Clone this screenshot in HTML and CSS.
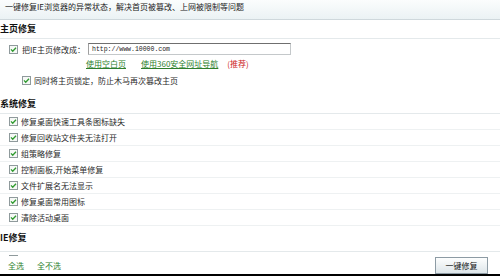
FILE: index.html
```html
<!DOCTYPE html>
<html lang="zh-CN">
<head>
<meta charset="utf-8">
<title>IE修复</title>
<link rel="stylesheet" href="styles.css">
</head>
<body>
<div class="app">
  <div class="topbar">一键修复IE浏览器的异常状态，解决首页被篡改、上网被限制等问题</div>
  <div class="content">
    <div class="sec-title">主页修复</div>
    <div class="home-row">
      <svg class="cb" width="9" height="9" viewBox="0 0 9 9"><rect x="0.5" y="0.5" width="8" height="8" fill="#f6f8f6" stroke="#8f9a9c"/><path d="M2 4.4 L3.7 6.2 L7 2.7" stroke="#2f9a2f" stroke-width="1.3" fill="none"/></svg>
      <span class="home-label">把IE主页修改成：</span>
      <input class="url-input" type="text" value="http://www.10000.com" readonly>
    </div>
    <div class="links-row">
      <a class="lnk" href="#">使用空白页</a>
      <a class="lnk" href="#">使用360安全网址导航</a>
      <span class="rec">(推荐)</span>
    </div>
    <div class="lock-row">
      <svg class="cb" width="9" height="9" viewBox="0 0 9 9"><rect x="0.5" y="0.5" width="8" height="8" fill="#f6f8f6" stroke="#8f9a9c"/><path d="M2 4.4 L3.7 6.2 L7 2.7" stroke="#2f9a2f" stroke-width="1.3" fill="none"/></svg>
      <span>同时将主页锁定，防止木马再次篡改主页</span>
    </div>

    <div class="sec-title sys">系统修复</div>
    <div class="item"><svg class="cb" width="9" height="9" viewBox="0 0 9 9"><rect x="0.5" y="0.5" width="8" height="8" fill="#f6f8f6" stroke="#8f9a9c"/><path d="M2 4.4 L3.7 6.2 L7 2.7" stroke="#2f9a2f" stroke-width="1.3" fill="none"/></svg><span>修复桌面快速工具条图标缺失</span></div>
    <div class="item"><svg class="cb" width="9" height="9" viewBox="0 0 9 9"><rect x="0.5" y="0.5" width="8" height="8" fill="#f6f8f6" stroke="#8f9a9c"/><path d="M2 4.4 L3.7 6.2 L7 2.7" stroke="#2f9a2f" stroke-width="1.3" fill="none"/></svg><span>修复回收站文件夹无法打开</span></div>
    <div class="item"><svg class="cb" width="9" height="9" viewBox="0 0 9 9"><rect x="0.5" y="0.5" width="8" height="8" fill="#f6f8f6" stroke="#8f9a9c"/><path d="M2 4.4 L3.7 6.2 L7 2.7" stroke="#2f9a2f" stroke-width="1.3" fill="none"/></svg><span>组策略修复</span></div>
    <div class="item"><svg class="cb" width="9" height="9" viewBox="0 0 9 9"><rect x="0.5" y="0.5" width="8" height="8" fill="#f6f8f6" stroke="#8f9a9c"/><path d="M2 4.4 L3.7 6.2 L7 2.7" stroke="#2f9a2f" stroke-width="1.3" fill="none"/></svg><span>控制面板,开始菜单修复</span></div>
    <div class="item"><svg class="cb" width="9" height="9" viewBox="0 0 9 9"><rect x="0.5" y="0.5" width="8" height="8" fill="#f6f8f6" stroke="#8f9a9c"/><path d="M2 4.4 L3.7 6.2 L7 2.7" stroke="#2f9a2f" stroke-width="1.3" fill="none"/></svg><span>文件扩展名无法显示</span></div>
    <div class="item"><svg class="cb" width="9" height="9" viewBox="0 0 9 9"><rect x="0.5" y="0.5" width="8" height="8" fill="#f6f8f6" stroke="#8f9a9c"/><path d="M2 4.4 L3.7 6.2 L7 2.7" stroke="#2f9a2f" stroke-width="1.3" fill="none"/></svg><span>修复桌面常用图标</span></div>
    <div class="item"><svg class="cb" width="9" height="9" viewBox="0 0 9 9"><rect x="0.5" y="0.5" width="8" height="8" fill="#f6f8f6" stroke="#8f9a9c"/><path d="M2 4.4 L3.7 6.2 L7 2.7" stroke="#2f9a2f" stroke-width="1.3" fill="none"/></svg><span>清除活动桌面</span></div>

    <div class="sec-title ie">IE修复</div>
    <div class="item"><svg class="cb" width="9" height="9" viewBox="0 0 9 9"><rect x="0.5" y="0.5" width="8" height="8" fill="#f6f8f6" stroke="#8f9a9c"/><path d="M2 4.4 L3.7 6.2 L7 2.7" stroke="#2f9a2f" stroke-width="1.3" fill="none"/></svg></div>
  </div>
  <div class="footer">
    <div class="sel-links">
      <a class="sel" href="#">全选</a>
      <a class="sel" href="#">全不选</a>
    </div>
    <button class="fix-btn" type="button">一键修复</button>
  </div>
</div>
</body>
</html>
```

FILE: styles.css
```css
html, body {
  margin: 0;
  padding: 0;
  background: #ffffff;
}

body {
  font-family: "Noto Sans CJK SC", "Noto Sans", sans-serif;
  font-size: 8px;
  color: #2a2a2a;
}

.app {
  width: 500px;
  height: 276px;
  box-sizing: border-box;
  border-bottom: 2px solid #000;
  display: flex;
  flex-direction: column;
}

.topbar {
  flex: none;
  height: 19px;
  border-bottom: 1px solid #cfd8dc;
  background: linear-gradient(#fbfdfd, #ebf2f4);
  padding-left: 5px;
  line-height: 14px;
  color: #222;
}

.content {
  flex: 1;
  min-height: 0;
  overflow: hidden;
}

.sec-title {
  height: 18px;
  line-height: 18px;
  font-size: 9px;
  font-weight: bold;
  color: #111;
  border-bottom: 1px solid #e4e9eb;
}

.sec-title.sys {
  margin-top: 8px;
}

.sec-title.ie {
  margin-top: 3px;
  padding-bottom: 4px;
}

.cb {
  display: block;
  flex: none;
}

.home-row {
  display: flex;
  align-items: center;
  height: 12px;
  margin-top: 4px;
  padding-left: 9px;
}

.home-row .cb {
  margin-right: 4px;
}

.home-label {
  width: 66px;
  white-space: nowrap;
}

.url-input {
  width: 203px;
  height: 12px;
  box-sizing: border-box;
  margin: 0;
  padding: 0 3px;
  border: 1px solid #c4c8ca;
  border-top-color: #6f6f6f;
  border-left-color: #a0a0a0;
  font-family: "Liberation Mono", monospace;
  font-size: 6.5px;
  line-height: 10px;
  color: #222;
  background: #fff;
  outline: none;
}

.links-row {
  display: flex;
  align-items: center;
  height: 14px;
  margin-top: 1px;
  padding-left: 86px;
}

.lnk {
  color: #2d7f2d;
  text-decoration: underline;
  margin-right: 15px;
}

.lnk + .lnk {
  margin-right: 9px;
}

.rec {
  color: #cc2222;
}

.lock-row {
  display: flex;
  align-items: center;
  height: 14px;
  margin-top: 3px;
  padding-left: 22px;
}

.lock-row .cb {
  margin-right: 3px;
}

.item {
  display: flex;
  align-items: center;
  height: 15px;
  padding-left: 9px;
  border-bottom: 1px solid #eef1f2;
}

.item .cb {
  margin-right: 3px;
}

.footer {
  flex: none;
  height: 18px;
  display: flex;
  align-items: center;
  justify-content: space-between;
  padding: 0 12px 0 8px;
  background: #fff;
}

.sel-links {
  display: flex;
  gap: 13px;
}

.sel {
  color: #2d7f2d;
  text-decoration: none;
}

.fix-btn {
  width: 53px;
  height: 17px;
  margin: 0;
  padding: 0;
  border: 1px solid #8d9ba4;
  background: linear-gradient(#fdfefe, #dde5e9);
  font-family: "Noto Sans CJK SC", sans-serif;
  font-size: 8px;
  color: #111;
}
```
